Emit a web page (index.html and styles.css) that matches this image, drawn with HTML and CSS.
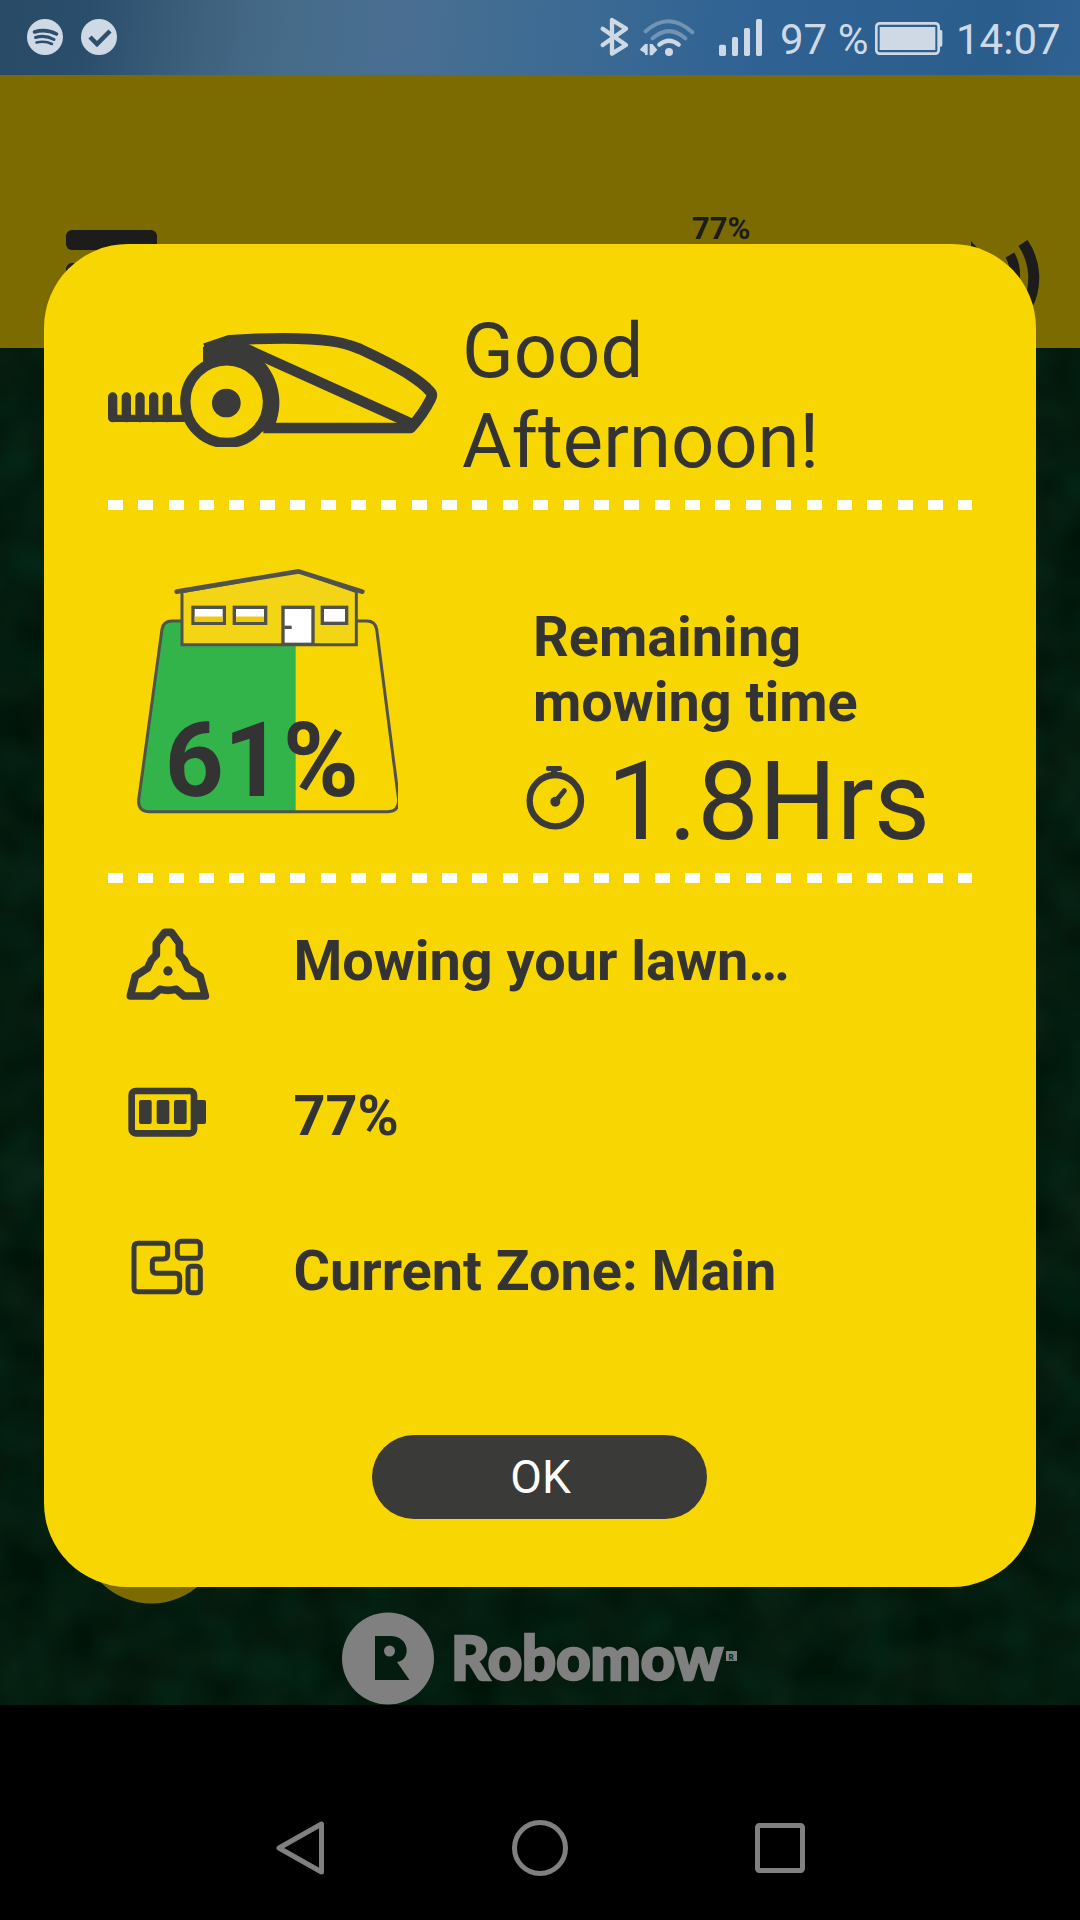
FILE: index.html
```html
<!DOCTYPE html>
<html lang="en">
<head>
    <meta charset="UTF-8">
    <meta name="viewport" content="width=device-width, initial-scale=1.0">
    <title>Robomow</title>
    <link rel="stylesheet" href="styles.css">
</head>
<body>
    <div class="status-bar">
        <svg class="notifications" width="100" height="75" viewBox="0 0 100 75">
            <circle cx="45" cy="37" r="18"/>
            <circle cx="99" cy="37" r="18"/>
            <g class="cutout">
                <path d="M34.500 32 Q46 28.500 56.500 34" stroke-width="3.600"/>
                <path d="M35.500 37.500 Q45 34.500 54 39.500" stroke-width="3"/>
                <path d="M36.500 42.500 Q45 40.500 52 44" stroke-width="2.600"/>
                <path d="M90 37 L97 44 L110 31" stroke-width="4.500" stroke-linecap="butt"/>
            </g>
        </svg>
        <div class="status-right">
            <svg class="radio-icons" width="170" height="75" viewBox="0 0 510 225">
                <g class="line">
                    <path d="M68 86 L138 135 L96 161 V60 L138 86 L68 135" stroke-width="13"/>
                    <path d="M197 94 Q267 32 337 97" stroke-width="12" opacity=".4"/>
                    <path d="M218 115 Q267 72 316 115" stroke-width="12" opacity=".4"/>
                    <path d="M238 134 Q267 110 296 134" stroke-width="13"/>
                </g>
                <circle cx="267" cy="156" r="12"/>
                <path d="M179 149 L195 132 H203 V165 H195 V160 Z M209 132 H217 L232 149 L217 166 H209 Z"/>
                <rect x="417" y="134" width="21" height="34" rx="5"/>
                <rect x="456" y="111" width="18" height="57" rx="5"/>
                <rect x="492" y="84" width="18" height="84" rx="5"/>
            </svg>
            <svg class="last-bar" width="12" height="75" viewBox="0 0 36 225">
                <rect x="18" y="57" width="18" height="111" rx="5"/>
            </svg>
            <span class="battery-level">97 %</span>
            <svg class="battery" width="68" height="75" viewBox="0 0 204 225">
                <rect class="line" x="4" y="70" width="187" height="91" rx="10" stroke-width="8"/>
                <rect x="14" y="81" width="167" height="69"/>
                <path d="M192 90 h6 q4 0 4 5 v40 q0 5 -4 5 h-6 z"/>
            </svg>
            <span class="clock">14:07</span>
        </div>
    </div>

    <div class="app">
        <div class="app-header">
            <svg width="1080" height="273" viewBox="0 75 1080 273">
                <rect x="66" y="230" width="91" height="20" rx="6"/>
                <rect x="66" y="263" width="91" height="20" rx="6"/>
                <path class="arc" d="M1023 243 A62 62 0 0 1 1027 306" stroke-width="11"/>
                <path class="arc" d="M1010 255 A42 42 0 0 1 1010 295" stroke-width="10"/>
                <path d="M971 250 V241 L979 250 Z"/>
                <text x="692" y="239">77%</text>
            </svg>
        </div>
        <div class="lawn">
            <svg class="grass" width="1080" height="1357">
                <filter id="grass" x="0" y="0" width="100%" height="100%" color-interpolation-filters="sRGB">
                    <feTurbulence type="fractalNoise" baseFrequency="0.02" numOctaves="2" seed="4"/>
                    <feColorMatrix values=".04 .03 0 0 -.022  0 .1 0 0 .06  0 .08 0 0 .018  0 0 0 0 1"/>
                </filter>
                <rect width="1080" height="1357" filter="url(#grass)"/>
                <circle class="round-button" cx="151.500" cy="1184" r="71.500"/>
            </svg>
            <svg class="brand" width="440" height="93" viewBox="0 0 440 93">
                <circle cx="48" cy="46.500" r="46"/>
                <path class="mark" d="M35 24 H50 C71 24 71 49 57 50 L69.500 68 H35 Z"/>
                <circle cx="49.500" cy="39" r="5.500"/>
                <text x="111" y="67.500" textLength="272" lengthAdjust="spacingAndGlyphs">Robomow</text>
                <rect x="386" y="39" width="11" height="10"/>
                <text class="reg" x="388.500" y="47.500">R</text>
            </svg>
        </div>
    </div>

    <div class="nav-bar">
        <svg width="50" height="56" viewBox="0 0 50 56">
            <path d="M46.500 4 V52 L4 28 Z"/>
        </svg>
        <svg width="56" height="56" viewBox="0 0 56 56">
            <circle cx="28" cy="28" r="25.500"/>
        </svg>
        <svg width="50" height="50" viewBox="0 0 50 50">
            <rect x="2.500" y="2.500" width="45" height="45" rx="2"/>
        </svg>
    </div>

    <!-- Welcome dialog -->
    <div class="modal">
        <div class="greeting">
            <svg class="mower" width="330" height="115" viewBox="54 67 990 345">
                <g class="draw">
                    <path d="M345 117 L418 92 Q500 86 580 86 C700 86 760 96 810 118 Q900 160 950 190 Q1000 222 1018 243 Q1030 254 1022 268 Q1000 312 962 355 H520" stroke-width="32"/>
                    <path d="M440 105 L960 340" stroke-width="32"/>
                    <path d="M66 326 H290" stroke-width="22"/>
                    <path d="M68 262 V324 M109 262 V324 M150 262 V324 M191 262 V324 M232 262 V324" stroke-width="28" stroke-linecap="round"/>
                </g>
                <path d="M339 112 L418 77 L470 98 L520 155 C560 200 585 270 555 345 L505 372 C540 310 530 200 430 170 L339 170 Z"/>
                <circle class="wheel" cx="410" cy="276" r="124"/>
                <path d="M500 155 C550 190 585 270 554 348 L500 372 C525 320 535 240 480 175 Z"/>
                <circle cx="409" cy="280" r="43"/>
            </svg>
            <h1>Good<br>Afternoon!</h1>
        </div>
        <div class="divider"></div>
        <div class="progress">
            <svg class="house" width="262" height="280" viewBox="78 50 786 840">
                <path class="mowed" d="M557 285 V787 H115 Q82 780 86 752 L155 240 Q160 215 186 215 H215 V285 Z"/>
                <path class="fence" d="M215 215 H186 Q160 215 156 240 L86 752 Q84 787 118 787 H834 Q866 787 866 752 L800 240 Q796 215 770 215 H740"/>
                <path class="wall" d="M216 127 L565 66 L739 127 V286 H216 Z"/>
                <path class="roof" d="M200 127 L565 66 L757 127"/>
                <g class="window">
                    <rect x="249" y="174" width="94" height="48"/>
                    <rect x="373" y="174" width="94" height="48"/>
                    <rect x="637" y="174" width="73" height="48"/>
                    <rect x="519" y="174" width="90" height="111"/>
                    <path d="M523 234 H545"/>
                </g>
                <path class="sill" d="M254 209 H338 M378 209 H462"/>
                <text x="164" y="741">61%</text>
            </svg>
            <div class="remaining">
                <h2>Remaining<br>mowing time</h2>
                <div class="time">
                    <svg width="60" height="66" viewBox="48 528 180 198">
                        <circle class="draw" cx="136" cy="635" r="77" stroke-width="19"/>
                        <rect x="108" y="531" width="48" height="15" rx="6"/>
                        <rect x="123" y="540" width="19" height="20"/>
                        <circle cx="136" cy="638" r="15"/>
                        <path class="draw" d="M136 638 L163 605" stroke-width="15" stroke-linecap="round"/>
                    </svg>
                    <span>1.8Hrs</span>
                </div>
            </div>
        </div>
        <div class="divider"></div>
        <div class="info-row">
            <svg width="96" height="76" viewBox="30 51 288 228">
                <path class="draw" d="M164 67 H184 L208 100 V134 L223 150 L233 174 L270 198 L286 258 H222 L199 238 Q174 244 149 238 L126 258 H61 L76 198 L113 174 L124 150 L139 134 V100 Z" stroke-width="23"/>
                <circle cx="174" cy="183" r="14"/>
            </svg>
            <span>Mowing your lawn…</span>
        </div>
        <div class="info-row">
            <svg width="96" height="76" viewBox="30 516 288 228">
                <rect class="draw" x="65" y="543" width="187" height="127" rx="12" stroke-width="20"/>
                <rect x="87" y="570" width="38" height="72" rx="6"/>
                <rect x="140" y="570" width="38" height="72" rx="6"/>
                <rect x="192" y="570" width="38" height="72" rx="6"/>
                <rect x="256" y="570" width="32" height="72" rx="6"/>
            </svg>
            <span>77%</span>
        </div>
        <div class="info-row">
            <svg width="96" height="76" viewBox="30 981 288 228">
                <g class="draw" stroke-width="15">
                    <path d="M84 1000 H160 Q173 1000 173 1013 V1033 Q173 1047 160 1047 H138 Q127 1047 127 1057 V1077 Q127 1090 140 1090 H196 Q209 1090 209 1104 V1131 Q209 1145 196 1145 H84 Q72 1145 72 1133 V1012 Q72 1000 84 1000 Z"/>
                    <rect x="202" y="994" width="69" height="51" rx="12"/>
                    <rect x="234" y="1069" width="37" height="79" rx="10"/>
                </g>
            </svg>
            <span>Current Zone: Main</span>
        </div>
        <button type="button">OK</button>
    </div>
</body>
</html>
```
FILE: styles.css
```css
body {
    margin: 0;
    width: 1080px;
    height: 1920px;
    position: relative;
    overflow: hidden;
    background-color: #000;
    font-family: Roboto, "Liberation Sans", sans-serif;
    color: #333;
}
svg {
    display: block;
    flex: none;
}

/* Status bar */
.status-bar {
    height: 75px;
    display: flex;
    justify-content: space-between;
    background: linear-gradient(97deg, #284a66 0, #2b4e6d 90px, #3f627e 210px, #466c8a 290px, #496e92 410px, #3f6c93 530px, #2f6293 760px, #2b5d8c 1000px, #2f6293 1080px);
    color: #ced9e5;
}
.status-bar svg {
    fill: #ced9e5;
    overflow: visible;
}
.status-bar .cutout {
    fill: none;
    stroke: #2b4f6d;
    stroke-linecap: round;
}
.status-bar .line {
    fill: none;
    stroke: #ced9e5;
    stroke-linecap: round;
    stroke-linejoin: round;
}
.status-right {
    display: flex;
    font-size: 42px;
    line-height: 79px;
    white-space: nowrap;
}
.status-right span {
    height: 75px;
}
.battery-level {
    width: 95px;
    margin-left: 18px;
}
.clock {
    width: 124px;
    margin-left: 13px;
}

/* Dimmed app screen */
.app-header {
    height: 273px;
    background-color: #7c6b00;
}
.app-header svg {
    fill: #1c1c1c;
}
.app-header text {
    font-size: 31px;
    font-weight: bold;
}
.app-header .arc {
    fill: none;
    stroke: #1c1c1c;
}
.lawn {
    height: 1357px;
    display: flex;
    flex-direction: column;
    justify-content: flex-end;
    position: relative;
    background-color: #021c0f;
}
.grass {
    position: absolute;
    top: 0;
    left: 0;
}
.round-button {
    fill: #7c6b00;
}
.brand {
    position: relative;
    margin-left: 340px;
    fill: #808080;
}
.brand .mark {
    fill: #021c0f;
}
.brand text {
    font-family: Lato, sans-serif;
    font-size: 60px;
    font-weight: 900;
    stroke: #808080;
    stroke-width: 2.5px;
}
.brand .reg {
    font-size: 8px;
    fill: #021c0f;
    stroke: none;
}

/* Android buttons */
.nav-bar {
    height: 215px;
    padding-top: 71px;
    box-sizing: border-box;
    display: flex;
    justify-content: center;
    align-items: center;
    gap: 187px;
}
.nav-bar svg {
    fill: none;
    stroke: #808080;
    stroke-width: 5;
    stroke-linejoin: round;
}

/* Dialog */
.modal {
    position: absolute;
    top: 244px;
    left: 44px;
    width: 992px;
    height: 1343px;
    box-sizing: border-box;
    padding: 62px 64px 0 64px;
    border-radius: 84px;
    background-color: #f7d602;
}
.modal svg {
    fill: #3a3a38;
}
.modal .draw {
    fill: none;
    stroke: #3a3a38;
    stroke-linejoin: round;
}
.greeting {
    display: flex;
    height: 194px;
}
.mower {
    margin-top: 26px;
}
.mower .wheel {
    fill: #f7d602;
    stroke: #3a3a38;
    stroke-width: 31;
}
h1 {
    margin: 0 0 0 24px;
    font-size: 76px;
    font-weight: normal;
    line-height: 90px;
}
.divider {
    height: 10px;
    background: repeating-linear-gradient(90deg, #fff 0, #fff 15px, transparent 15px, transparent 30.370px);
}
.progress {
    display: flex;
    height: 363px;
}
.house {
    margin: 56px 0 0 28px;
}
.house text {
    font-size: 309px;
    font-weight: bold;
    fill: #333;
}
.mowed {
    fill: #33b44a;
}
.fence {
    fill: none;
    stroke: #50524b;
    stroke-width: 9;
}
.wall {
    fill: #f3d516;
    stroke: #50524b;
    stroke-width: 9;
}
.roof {
    fill: none;
    stroke: #50524b;
    stroke-width: 14;
    stroke-linecap: round;
}
.window {
    fill: #fff;
    stroke: #50524b;
    stroke-width: 10;
}
.sill {
    stroke: #efc90c;
    stroke-width: 15;
}
.remaining {
    margin: 95px 0 0 128px;
}
h2 {
    margin: 0 0 12px 7px;
    font-size: 55.800px;
    line-height: 65px;
}
.time {
    display: flex;
    font-size: 109.300px;
    line-height: 110px;
}
.time svg {
    margin: 18px 21px 0 0;
}
.info-row {
    display: flex;
    height: 155px;
    padding-left: 12px;
    font-size: 55.800px;
    font-weight: bold;
    line-height: 60px;
}
.divider + .info-row {
    margin-top: 44px;
}
.info-row span {
    margin: 4px 0 0 77.500px;
}
button {
    display: block;
    width: 335px;
    height: 84px;
    margin: 43px 0 0 264px;
    padding: 0 0 0 2px;
    border: none;
    border-radius: 42px;
    background-color: #3a3a38;
    color: #fff;
    font-family: inherit;
    font-size: 46px;
}
```
